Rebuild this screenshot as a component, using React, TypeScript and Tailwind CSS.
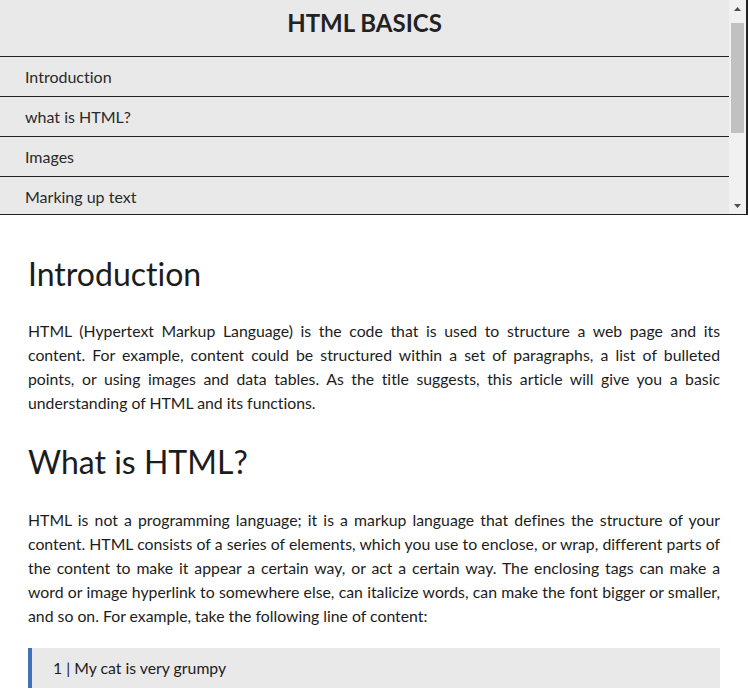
const navItems = ["Introduction", "what is HTML?", "Images", "Marking up text"];

const intro =
  "HTML (Hypertext Markup Language) is the code that is used to structure a web page and its content. For example, content could be structured within a set of paragraphs, a list of bulleted points, or using images and data tables. As the title suggests, this article will give you a basic understanding of HTML and its functions.";

const whatIs =
  "HTML is not a programming language; it is a markup language that defines the structure of your content. HTML consists of a series of elements, which you use to enclose, or wrap, different parts of the content to make it appear a certain way, or act a certain way. The enclosing tags can make a word or image hyperlink to somewhere else, can italicize words, can make the font bigger or smaller, and so on. For example, take the following line of content:";

function FakeScrollbar() {
  // classic scrollbar drawing: arrows + thumb
  return (
    <div className="flex w-[17px] shrink-0 flex-col bg-[#f1f1f1]">
      <div className="flex h-[17px] items-center justify-center">
        <svg width="7" height="4" viewBox="0 0 7 4">
          <path d="M3.5 0L7 4H0z" fill="#505050" />
        </svg>
      </div>
      <div className="flex-1">
        <div className="mx-[2px] mt-[6px] h-[110px] bg-[#c1c1c1]" />
      </div>
      <div className="flex h-[17px] items-center justify-center">
        <svg width="7" height="4" viewBox="0 0 7 4">
          <path d="M0 0H7L3.5 4z" fill="#505050" />
        </svg>
      </div>
    </div>
  );
}

export default function App() {
  return (
    <div className="flex h-screen flex-col overflow-hidden bg-white font-['Lato',sans-serif] text-[#1c1c1c] [font-variant-ligatures:none]">
      <nav className="flex h-[215px] shrink-0 border-r-2 border-b border-[#222] bg-[#e9e9e9]">
        <div className="h-full flex-1 overflow-hidden">
          <header className="h-14 pt-2 text-center text-2xl leading-[30px] font-bold text-[#222]">
            HTML BASICS
          </header>
          <ul>
            {navItems.map((item) => (
              <li
                key={item}
                className="flex h-10 items-center border-t border-[#222] px-[25px] text-base leading-6 text-[#2a2a2a]"
              >
                {item}
              </li>
            ))}
          </ul>
        </div>
        <FakeScrollbar />
      </nav>

      <main className="flex-1 px-7 pt-10">
        <h1 className="mb-[26px] text-[32px] leading-[38px] font-normal">
          Introduction
        </h1>
        <p className="text-justify text-[15.8px] leading-6">{intro}</p>

        <h2 className="mt-[28px] mb-[27px] text-[32px] leading-[38px] font-normal">
          What is HTML?
        </h2>
        <p className="text-justify text-[15.8px] leading-6">{whatIs}</p>

        <div className="mt-5 border-l-4 border-[#3f72b5] bg-[#e9e9e9] py-2 pl-[21px] text-[15.8px] leading-6">
          1 | My cat is very grumpy
        </div>
      </main>
    </div>
  );
}
